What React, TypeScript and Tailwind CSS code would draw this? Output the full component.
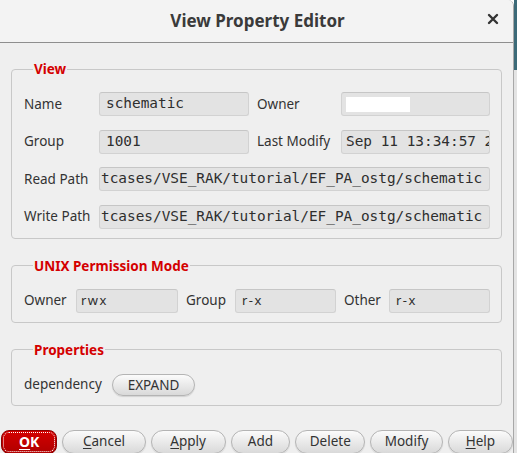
import React from "react";

const sans = { fontFamily: '"Noto Sans", "Open Sans", sans-serif' };
const mono = { fontFamily: '"DejaVu Sans Mono", "Liberation Mono", monospace' };

const Field = ({ value, className = "", pad = "pl-1.5", small = false }: { value?: string; className?: string; pad?: string; small?: boolean }) => (
  <div
    className={`h-6 min-w-0 bg-[#e3e3e3] border border-[#d2d2d2] border-t-[#c6c6c6] rounded-[3px] flex items-center overflow-hidden whitespace-nowrap text-[#2e2e2e] ${pad} ${small ? "text-[13px] tracking-[1.5px]" : "text-[14.4px]"} ${className}`}
    style={small ? sans : mono}
  >
    {value}
  </div>
);

const Group = ({ title, children, className = "" }: { title: string; children: React.ReactNode; className?: string }) => (
  <fieldset className={`min-w-0 border border-[#c8c8c8] rounded-[4px] pl-[12px] pr-[11px] ${className}`}>
    <legend className="ml-[9px] px-[1px] text-[13.5px] leading-4 font-bold text-[#d40000]">{title}</legend>
    {children}
  </fieldset>
);

const Btn = ({ children, w }: { children: React.ReactNode; w: string }) => (
  <button
    className={`h-6 ${w} rounded-[12px] border border-[#b4b4b4] bg-linear-to-b from-[#fbfbfb] to-[#d9d9d9] text-[13.5px] text-[#333] shadow-[0_1px_1px_rgba(0,0,0,0.12)] flex items-center justify-center`}
  >
    {children}
  </button>
);

export default function App() {
  return (
    <div className="w-[517px] h-[453px] flex text-[#333]" style={sans}>
      <div className="w-[514px] h-full flex flex-col bg-[#efefef] border-r border-[#a8a8a8] rounded-tr-[6px] overflow-hidden">
        <div className="h-[43px] shrink-0 bg-[#f3f3f3] border-b border-[#8e8e8e] flex items-center relative">
          <div className="flex-1 text-center text-[17px] font-bold text-[#3a3a3a] pl-[2px]">View Property Editor</div>
          <div className="absolute right-[13px] top-[12px] text-[#333]">
            <svg width="14" height="14" viewBox="0 0 14 14">
              <path d="M3 3 L11 11 M11 3 L3 11" stroke="#333" strokeWidth="2.4" strokeLinecap="round" />
            </svg>
          </div>
        </div>

        <div className="pl-[11px] pr-[11px] pt-[18px] text-[13.5px]">
          <Group title="View" className="pt-[15px] pb-[9px]">
            <div className="flex flex-col gap-y-[13.5px]">
              <div className="flex items-center">
                <span className="w-[75px] shrink-0">Name</span>
                <Field value="schematic" className="w-[150px] shrink-0" />
                <span className="w-[92px] shrink-0 pl-[8px]">Owner</span>
                <div className="flex-1 min-w-0 h-6 bg-[#e3e3e3] border border-[#d2d2d2] border-t-[#c6c6c6] rounded-[3px] flex items-center pl-[4px]">
                  <div className="w-[64px] h-[15px] bg-white" />
                </div>
              </div>
              <div className="flex items-center">
                <span className="w-[75px] shrink-0">Group</span>
                <Field value="1001" className="w-[150px] shrink-0" />
                <span className="w-[92px] shrink-0 pl-[8px]">Last Modify</span>
                <Field value="Sep 11 13:34:57 2018" className="flex-1" pad="pl-[4px]" />
              </div>
              <div className="flex items-center">
                <span className="w-[75px] shrink-0">Read Path</span>
                <Field value="tcases/VSE_RAK/tutorial/EF_PA_ostg/schematic" className="flex-1" pad="pl-[1px]" />
              </div>
              <div className="flex items-center">
                <span className="w-[75px] shrink-0">Write Path</span>
                <Field value="tcases/VSE_RAK/tutorial/EF_PA_ostg/schematic" className="flex-1" pad="pl-[1px]" />
              </div>
            </div>
          </Group>

          <Group title="UNIX Permission Mode" className="mt-[19px] pt-[15px] pb-[9px]">
            <div className="flex items-center">
              <span className="w-[52px] shrink-0">Owner</span>
              <Field value="rwx" className="w-[102px] shrink-0" pad="pl-[4px]" small />
              <span className="w-[57px] shrink-0 pl-[8px]">Group</span>
              <Field value="r-x" className="w-[101px] shrink-0" pad="pl-[6px]" small />
              <span className="w-[53px] shrink-0 pl-[8px]">Other</span>
              <Field value="r-x" className="flex-1" pad="pl-[6px]" small />
            </div>
          </Group>

          <Group title="Properties" className="mt-[19px] pt-[16px] pb-[9px]">
            <div className="flex items-center h-[22px]">
              <span className="w-[88px] shrink-0">dependency</span>
              <button className="h-[22px] w-[83px] rounded-[11px] border border-[#b4b4b4] bg-linear-to-b from-[#fbfbfb] to-[#d9d9d9] text-[13.5px] text-[#333] shadow-[0_1px_1px_rgba(0,0,0,0.12)]">
                EXPAND
              </button>
            </div>
          </Group>
        </div>

        <div className="mt-[24px] pl-[1px] flex gap-[5px]">
          <button className="h-6 w-[57px] rounded-[8px] border border-[#8a0000] bg-linear-to-b from-[#d40000] to-[#b00000] text-white font-bold text-[14px] outline-1 outline-dotted outline-white outline-offset-[-3px] flex items-center justify-center">
            <span className="underline underline-offset-2">O</span>K
          </button>
          <Btn w="w-[84px]"><span className="underline underline-offset-2">C</span>ancel</Btn>
          <Btn w="w-[76px]"><span className="underline underline-offset-2">A</span>pply</Btn>
          <Btn w="w-[60px]">Add</Btn>
          <Btn w="w-[71px]">Delete</Btn>
          <Btn w="w-[73px]">Modify</Btn>
          <Btn w="w-[66px]"><span className="underline underline-offset-2">H</span>elp</Btn>
        </div>
      </div>
      <div className="w-[3px] h-full flex flex-col">
        <div className="h-[70px] bg-[#3c6a78]" />
        <div className="flex-1 bg-[#e4e4e4]" />
      </div>
    </div>
  );
}
